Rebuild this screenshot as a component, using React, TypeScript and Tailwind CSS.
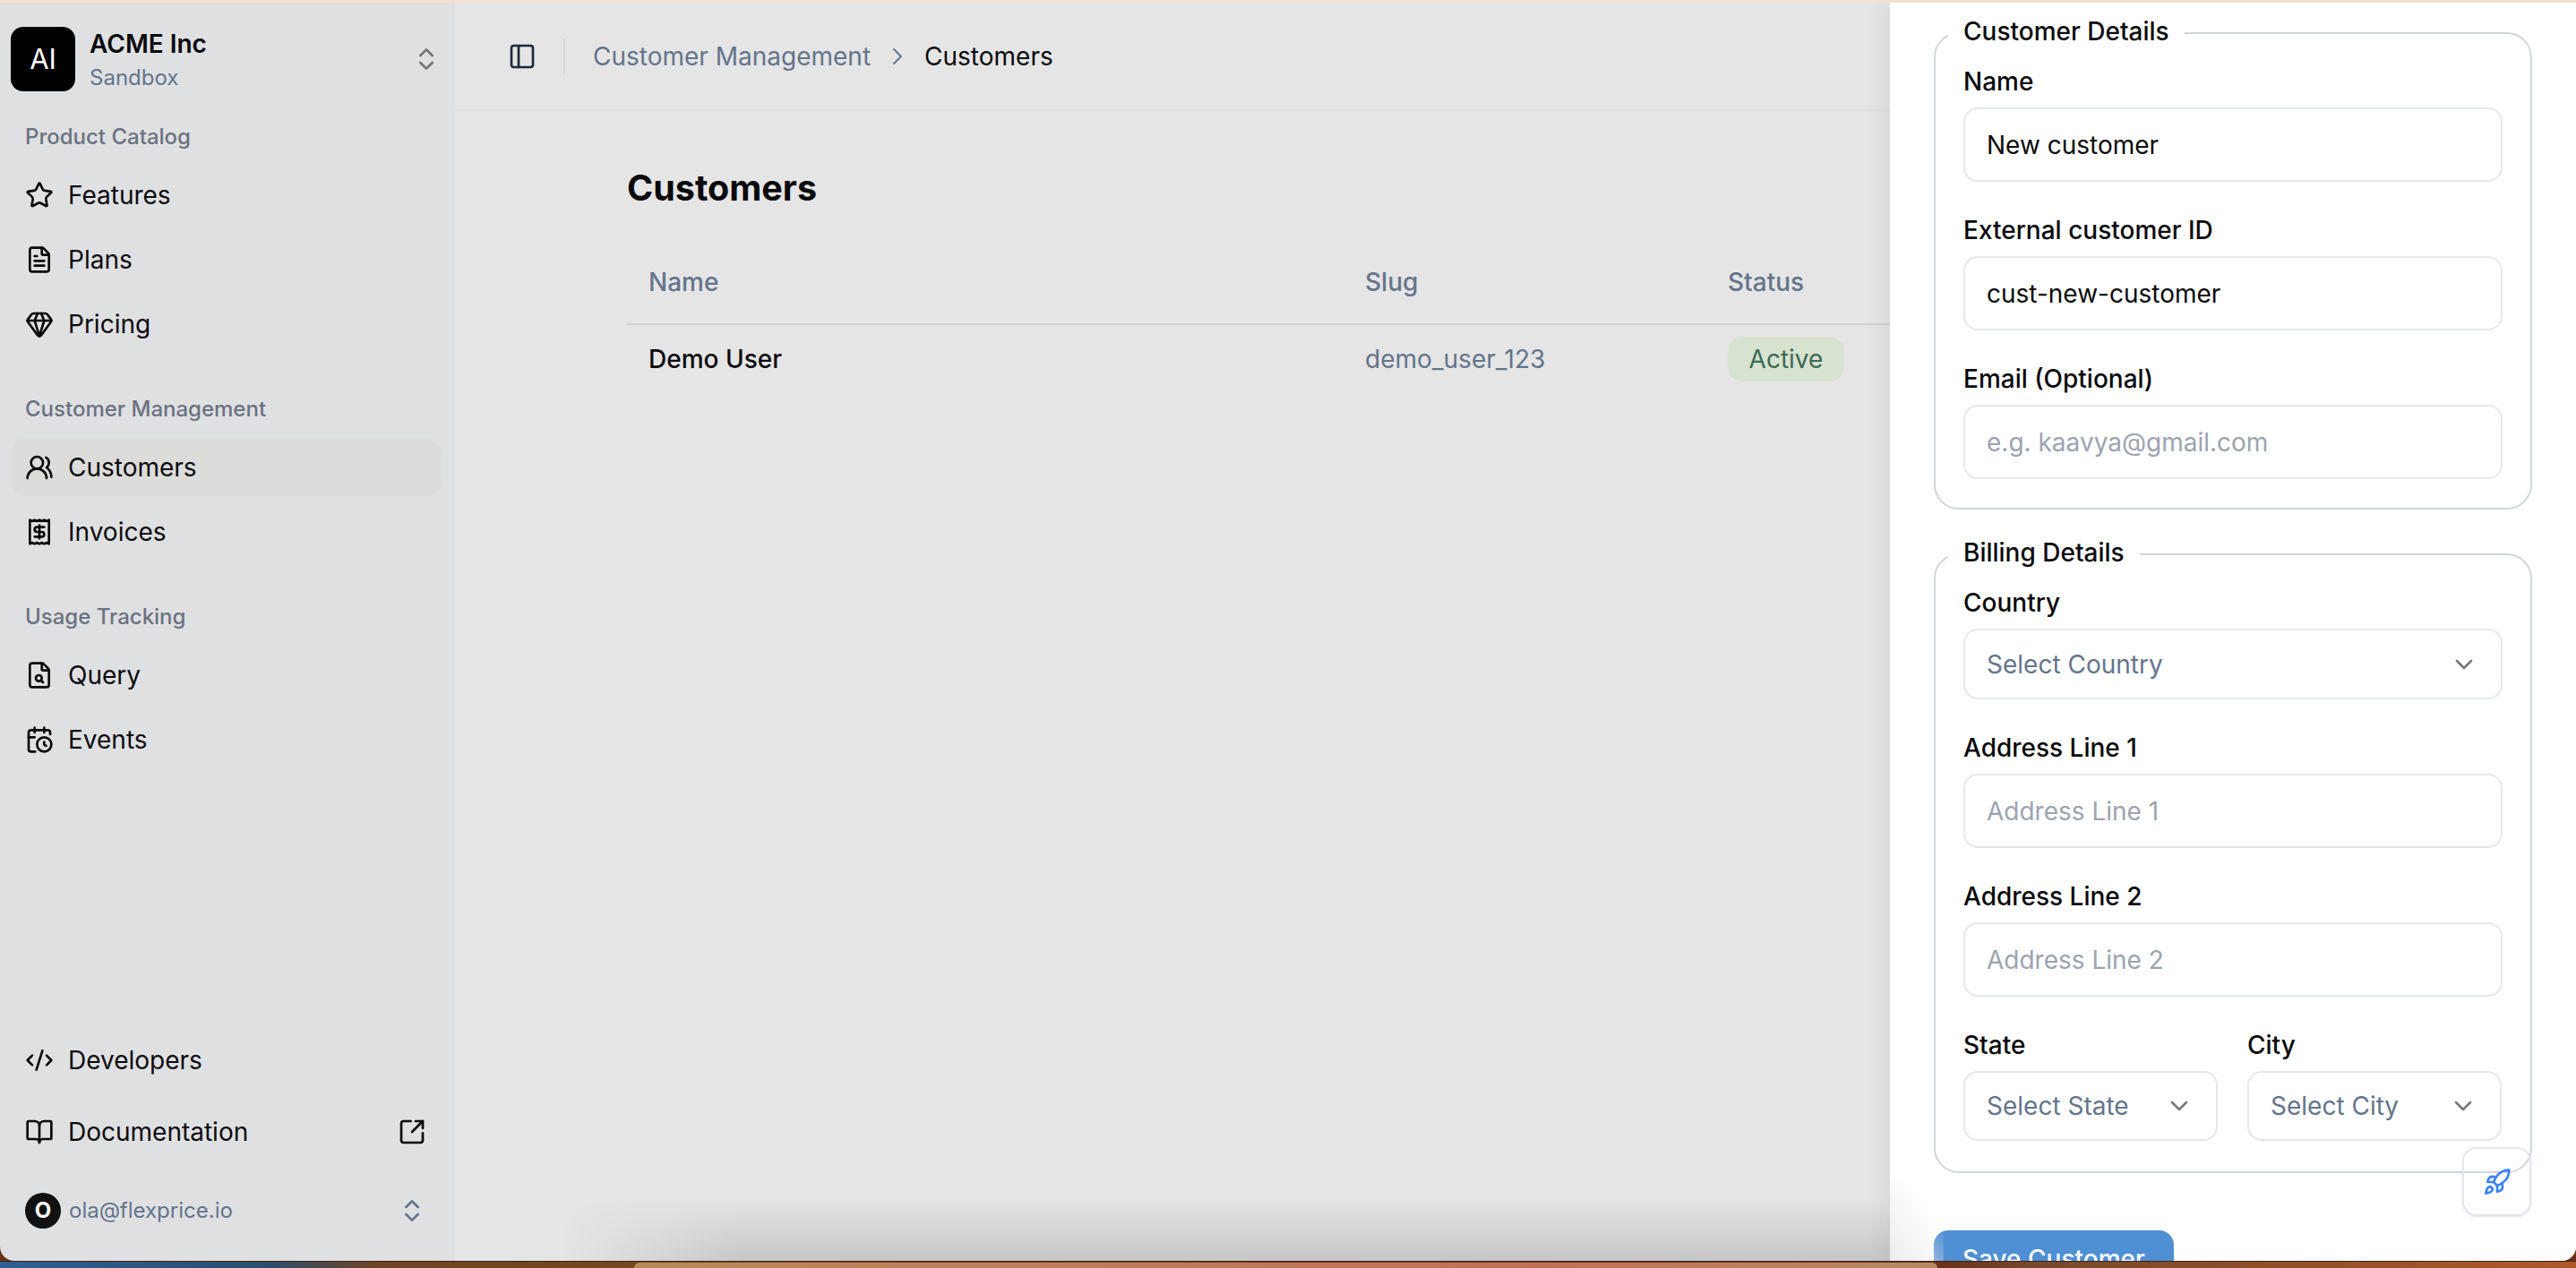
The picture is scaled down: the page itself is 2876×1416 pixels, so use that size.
import { FC, ReactNode } from 'react'
import {
  BookOpen,
  CalendarClock,
  ChevronDown,
  ChevronRight,
  ChevronsUpDown,
  CodeXml,
  FileSearch,
  FileText,
  Gem,
  PanelLeft,
  Receipt,
  Rocket,
  SquareArrowOutUpRight,
  Star,
  UsersRound,
} from 'lucide-react'

const NavItem: FC<{ icon: ReactNode; label: string; active?: boolean; extra?: ReactNode }> = ({
  icon,
  label,
  active,
  extra,
}) => (
  <div
    className={`flex h-16 items-center gap-4 rounded-2xl px-4 text-[28px] text-[#09090b] ${active ? 'bg-[#dcdcda]' : ''}`}
  >
    {icon}
    <span className="flex-1">{label}</span>
    {extra}
  </div>
)

const NavGroup: FC<{ title: string; children: ReactNode }> = ({ title, children }) => (
  <div>
    <div className="mb-[17px] px-4 text-[24px] leading-8 font-medium text-[#6b7280]">{title}</div>
    <div className="flex flex-col gap-2">{children}</div>
  </div>
)

const Sidebar: FC = () => (
  <aside className="flex h-full w-[508px] flex-none flex-col bg-[#dfe0e2] pr-4 pl-3">
    <div className="mt-[27px] flex h-[72px] items-center">
      <div className="flex h-[72px] w-[72px] flex-none items-center justify-center rounded-[14px] bg-black text-[31px] text-white">
        AI
      </div>
      <div className="ml-4 flex-1 pt-0.5">
        <div className="text-[28px] leading-9 font-semibold text-[#09090b]">ACME Inc</div>
        <div className="mt-1 text-[24px] leading-8 text-[#64748b]">Sandbox</div>
      </div>
      <ChevronsUpDown size={32} strokeWidth={2} className="text-[#737373]" />
    </div>

    <div className="mt-[35px] flex flex-col gap-[47px]">
      <NavGroup title="Product Catalog">
        <NavItem icon={<Star size={32} />} label="Features" />
        <NavItem icon={<FileText size={32} />} label="Plans" />
        <NavItem icon={<Gem size={32} />} label="Pricing" />
      </NavGroup>
      <NavGroup title="Customer Management">
        <NavItem icon={<UsersRound size={32} />} label="Customers" active />
        <NavItem icon={<Receipt size={32} />} label="Invoices" />
      </NavGroup>
      <NavGroup title="Usage Tracking">
        <NavItem icon={<FileSearch size={32} />} label="Query" />
        <NavItem icon={<CalendarClock size={32} />} label="Events" />
      </NavGroup>
    </div>

    <div className="mt-auto flex flex-col gap-4">
      <NavItem icon={<CodeXml size={32} />} label="Developers" />
      <NavItem
        icon={<BookOpen size={32} />}
        label="Documentation"
        extra={<SquareArrowOutUpRight size={32} />}
      />
    </div>
    <div className="mt-9 mb-9 flex h-10 items-center px-4">
      <div className="flex h-10 w-10 flex-none items-center justify-center rounded-full bg-[#111111] text-[24px] font-bold text-white">
        O
      </div>
      <span className="ml-[9px] flex-1 text-[24px] text-[#64748b]">ola@flexprice.io</span>
      <ChevronsUpDown size={32} className="text-[#64748b]" />
    </div>
  </aside>
)

const MainArea: FC = () => (
  <main className="relative flex h-full min-w-0 flex-1 flex-col bg-[#e5e5e5]">
    <header className="flex h-[121px] flex-none items-center border-b-2 border-[#dfdfdf] pl-[59px] text-[28px]">
      <PanelLeft size={32} className="text-[#1e293b]" />
      <div className="mr-[31px] ml-[30px] h-10 w-0.5 bg-[#d5d6d8]" />
      <span className="text-[#64748b]">Customer Management</span>
      <ChevronRight size={32} strokeWidth={1.5} className="mx-[14px] text-[#64748b]" />
      <span className="text-[#09090b]">Customers</span>
    </header>

    <div className="px-[192px] pt-[62px]">
      <h1 className="mb-[34px] text-[39.5px] leading-12 font-bold text-[#09090b]">Customers</h1>
      <table className="w-full table-fixed text-left text-[28px]">
        <thead>
          <tr className="border-b-2 border-[#cdd1d8]">
            <th className="h-[94px] w-[800px] pl-6 font-medium text-[#64748b]">Name</th>
            <th className="w-[405px] pl-6 font-medium text-[#64748b]">Slug</th>
            <th className="pl-6 font-medium text-[#64748b]">Status</th>
          </tr>
        </thead>
        <tbody>
          <tr>
            <td className="h-[76px] pl-6 font-medium text-[#09090b]">Demo User</td>
            <td className="pl-6 text-[#64748b]">demo_user_123</td>
            <td className="pl-6">
              <span className="inline-flex h-[50px] w-[130px] items-center justify-center rounded-2xl bg-[#d8e2d0] text-[#3a6b53]">
                Active
              </span>
            </td>
          </tr>
        </tbody>
      </table>
    </div>

    <div className="pointer-events-none absolute right-0 bottom-0 left-[120px] h-[70px] bg-[linear-gradient(to_top,#c6c6c6,transparent)] [mask-image:linear-gradient(to_right,transparent,black_200px)]" />
  </main>
)

const fieldInput =
  'h-[83px] w-full rounded-2xl border-2 border-[#e5e7eb] bg-white px-6 text-[28px] text-[#09090b] outline-none placeholder:text-[#9ca3af]'

const Field: FC<{ label: string; children: ReactNode }> = ({ label, children }) => (
  <div>
    <div className="mb-[13px] text-[28px] leading-8 font-medium text-[#09090b]">{label}</div>
    {children}
  </div>
)

const SelectBox: FC<{ placeholder: string; tall?: boolean }> = ({ placeholder, tall }) => (
  <div
    className={`flex w-full items-center justify-between rounded-2xl border-2 border-[#e5e7eb] bg-white pr-[25px] pl-6 text-[28px] text-[#64748b] ${tall ? 'h-[79px]' : 'h-[78px]'}`}
  >
    <span>{placeholder}</span>
    <ChevronDown size={32} className="text-[#7a7a7a]" />
  </div>
)

const Section: FC<{ title: string; bottom: string; children: ReactNode }> = ({ title, bottom, children }) => (
  <fieldset className={`rounded-[28px] border-2 border-[#d1d5db] px-[31px] pt-[22px] ${bottom}`}>
    <legend className="-ml-[17px] px-[17px] text-[28px] leading-8 font-medium text-[#09090b]">
      <span className="relative -top-0.5">{title}</span>
    </legend>
    <div className="flex flex-col gap-[38px]">{children}</div>
  </fieldset>
)

const CustomerDrawer: FC = () => (
  <div className="absolute top-0 right-0 bottom-0 w-[766px] overflow-hidden bg-white px-[49px] pt-[18px] shadow-[-10px_0_18px_rgba(0,0,0,0.05)]">
    <Section title="Customer Details" bottom="pb-8">
      <Field label="Name">
        <input className={fieldInput} defaultValue="New customer" />
      </Field>
      <Field label="External customer ID">
        <input className={fieldInput} defaultValue="cust-new-customer" />
      </Field>
      <Field label="Email (Optional)">
        <input className={fieldInput} placeholder="e.g. kaavya@gmail.com" />
      </Field>
    </Section>

    <div className="h-[34px]" />

    <Section title="Billing Details" bottom="pb-[34px]">
      <Field label="Country">
        <SelectBox placeholder="Select Country" tall />
      </Field>
      <Field label="Address Line 1">
        <input className={fieldInput} placeholder="Address Line 1" />
      </Field>
      <Field label="Address Line 2">
        <input className={fieldInput} placeholder="Address Line 2" />
      </Field>
      <div className="grid grid-cols-[284px_284px] gap-x-[33px]">
        <Field label="State">
          <SelectBox placeholder="Select State" />
        </Field>
        <Field label="City">
          <SelectBox placeholder="Select City" />
        </Field>
      </div>
    </Section>

    <button className="mt-[64px] h-16 rounded-2xl bg-[#4f90d4] px-8 text-[28px] font-medium text-white">
      Save Customer
    </button>

    <div className="pointer-events-none absolute bottom-0 left-0 h-[90px] w-[60px] bg-[linear-gradient(to_top_right,#ececec,transparent_70%)]" />

    <div className="absolute right-[50px] bottom-[50px] flex h-[77px] w-[77px] items-center justify-center rounded-2xl border-2 border-[#e5e7eb] shadow-sm">
      <Rocket size={32} className="text-[#3b82f6]" />
    </div>
  </div>
)

export default function App() {
  return (
    <div className="flex h-screen w-screen flex-col overflow-hidden bg-[#6a3219] font-['Inter',sans-serif]">
      <div className="h-[3px] flex-none bg-[#f5e0d0]" />
      <div className="relative flex min-h-0 flex-1 overflow-hidden rounded-b-2xl">
        <Sidebar />
        <MainArea />
        <CustomerDrawer />
      </div>
      <div className="relative h-2 flex-none border-t border-[#3a2415] bg-[linear-gradient(to_right,#2f5f92,#2c4d6e_300px,#6f4325_420px,#75481f_700px,#6a3219_2170px,#75482a_2260px,#b0582a)]">
        <div className="absolute top-px bottom-0 left-[708px] w-[1455px] rounded-t-xl bg-[linear-gradient(to_right,#b8885c,#c2705a_70%,#b58a66)]" />
      </div>
    </div>
  )
}
